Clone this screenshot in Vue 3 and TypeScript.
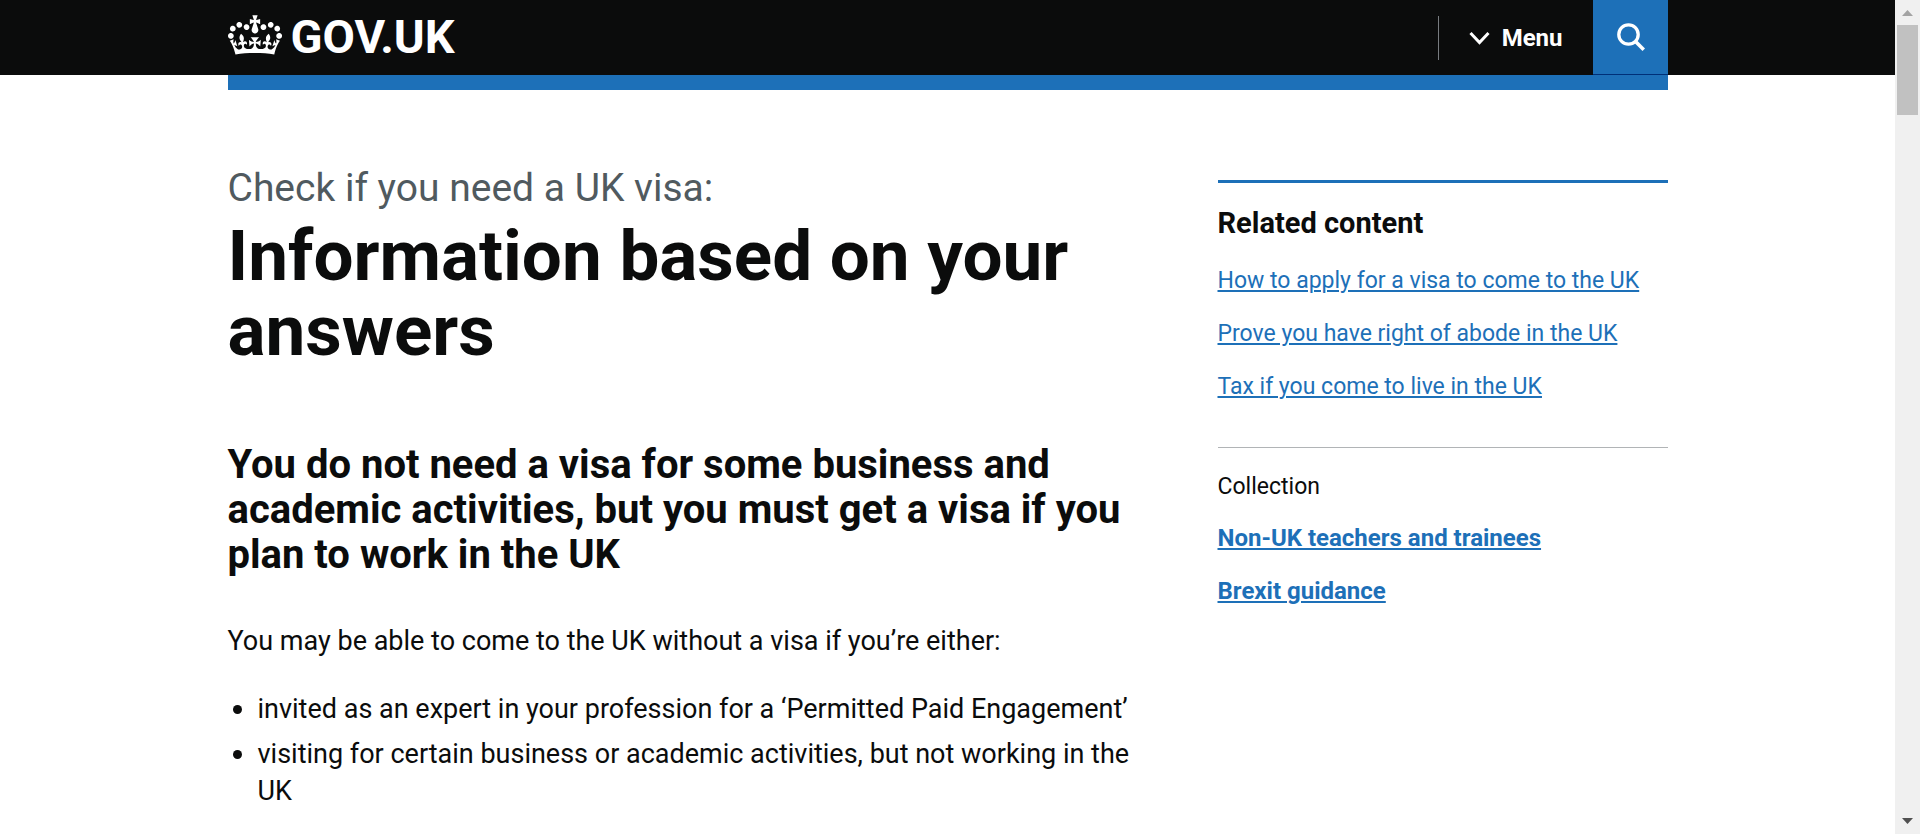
<script setup lang="ts">
interface RelatedLink {
  text: string
  href: string
}

const relatedLinks: RelatedLink[] = [
  { text: 'How to apply for a visa to come to the UK', href: '#apply' },
  { text: 'Prove you have right of abode in the UK', href: '#abode' },
  { text: 'Tax if you come to live in the UK', href: '#tax' },
]

const collections: RelatedLink[] = [
  { text: 'Non-UK teachers and trainees', href: '#teachers' },
  { text: 'Brexit guidance', href: '#brexit' },
]

const conditions: string[] = [
  'invited as an expert in your profession for a ‘Permitted Paid Engagement’',
  'visiting for certain business or academic activities, but not working in the UK',
]
</script>

<template>
  <div class="window">
    <div class="page">
      <header class="header">
        <div class="container header-row">
          <a class="logo" href="#home">
            <svg class="crown" viewBox="0 0 132 97" aria-hidden="true">
              <path
                fill="currentColor"
                fill-rule="evenodd"
                d="M25 30.2c3.5 1.5 7.7-.2 9.1-3.7 1.5-3.6-.2-7.8-3.9-9.2-3.6-1.4-7.6.3-9.1 3.9-1.4 3.5.3 7.5 3.9 9zM9 39.5c3.6 1.5 7.8-.2 9.2-3.7 1.5-3.6-.2-7.8-3.9-9.1-3.6-1.5-7.6.2-9.1 3.8-1.4 3.5.3 7.5 3.8 9zM4.4 57.2c3.5 1.5 7.7-.2 9.1-3.8 1.5-3.6-.2-7.7-3.9-9.1-3.5-1.5-7.6.3-9.1 3.8-1.4 3.5.3 7.6 3.9 9.1zm38.3-21.4c3.5 1.5 7.7-.2 9.1-3.8 1.5-3.6-.2-7.7-3.9-9.1-3.6-1.5-7.6.3-9.1 3.8-1.3 3.6.4 7.7 3.9 9.1zm64.4-5.6c-3.6 1.5-7.8-.2-9.1-3.7-1.5-3.6.2-7.8 3.8-9.2 3.6-1.4 7.7.3 9.2 3.9 1.3 3.5-.4 7.5-3.9 9zm15.9 9.3c-3.6 1.5-7.7-.2-9.1-3.7-1.5-3.6.2-7.8 3.7-9.1 3.6-1.5 7.7.2 9.2 3.8 1.5 3.5-.3 7.5-3.8 9zm4.7 17.7c-3.6 1.5-7.8-.2-9.2-3.8-1.5-3.6.2-7.7 3.9-9.1 3.6-1.5 7.7.3 9.2 3.8 1.3 3.5-.4 7.6-3.9 9.1zM89.3 35.8c-3.6 1.5-7.8-.2-9.2-3.8-1.4-3.6.2-7.7 3.9-9.1 3.6-1.5 7.7.3 9.2 3.8 1.4 3.6-.3 7.7-3.9 9.1zM69.7 17.7l8.9 4.7V9.3l-8.9 2.8c-.2-.3-.5-.6-.9-.9L72.4 0H59.6l3.5 11.2c-.3.3-.6.5-.9.9l-8.8-2.8v13.1l8.8-4.7c.3.3.6.7.9.9l-5 15.4v.1c-.2.8-.4 1.6-.4 2.4 0 4.1 3.1 7.5 7 8.1h.2c.3 0 .7.1 1 .1.4 0 .7 0 1-.1h.2c4-.6 7.1-4.1 7.1-8.1 0-.8-.1-1.7-.4-2.4V34l-5.1-15.4c.4-.2.7-.6 1-.9zM66 92.8c16.9 0 32.8 1.1 47.1 3.2 4-16.9 8.9-26.7 14-33.5l-9.6-3.4c1 4.9 1.1 7.2 0 10.2-1.5-1.4-3-4.3-4.2-8.7L108.6 76c2.8-2 5-3.2 7.5-3.3-4.4 9.4-10 11.9-13.6 11.2-4.3-.8-6.3-4.6-5.6-7.9 1-4.7 5.7-5.9 8-.5 4.3-8.7-3-11.4-7.6-8.8 7.1-7.2 7.9-13.5 2.1-21.1-8 6.1-8.1 12.3-4.5 20.8-4.7-5.4-12.1-2.5-9.5 6.2 3.4-5.2 7.9-2 7.2 3.1-.6 4.3-6.4 7.8-13.5 7.2-10.3-.9-10.9-8-11.2-13.8 2.5-.5 7.1 1.8 11 7.3L80.2 60c-4.1 4.4-8 5.3-12.3 5.4 1.4-4.4 8-11.6 8-11.6H55.5s6.4 7.2 7.9 11.6c-4.2-.1-8-1-12.3-5.4l1.4 16.4c3.9-5.5 8.5-7.7 10.9-7.3-.3 5.8-.9 12.8-11.1 13.8-7.2.6-12.9-2.9-13.5-7.2-.7-5 3.8-8.3 7.1-3.1 2.7-8.7-4.6-11.6-9.4-6.2 3.7-8.5 3.6-14.7-4.6-20.8-5.8 7.6-5 13.9 2.2 21.1-4.7-2.6-11.9.1-7.7 8.8 2.3-5.5 7.1-4.2 8.1.5.7 3.3-1.3 7.1-5.7 7.9-3.5.7-9-1.8-13.5-11.2 2.5.1 4.7 1.3 7.5 3.3l-4.7-15.4c-1.2 4.4-2.7 7.2-4.3 8.7-1.1-3-.9-5.3 0-10.2l-9.5 3.4c5 6.9 9.9 16.7 14 33.5 14.8-2.1 30.8-3.2 47.7-3.2z"
              />
            </svg>
            <span class="logo-text">GOV.UK</span>
          </a>
          <div class="header-actions">
            <span class="divider"></span>
            <button class="menu-button" type="button">
              <svg class="chevron" viewBox="0 0 21 14" aria-hidden="true">
                <path d="M1.5 2l9 9.500 9-9.500" fill="none" stroke="currentColor" stroke-width="3" />
              </svg>
              Menu
            </button>
            <button class="search-button" type="button" aria-label="Search GOV.UK">
              <svg class="search-icon" viewBox="0 0 30 30" aria-hidden="true">
                <circle cx="13.500" cy="12.500" r="9.700" fill="none" stroke="currentColor" stroke-width="3.300" />
                <path d="M20.300 19.300l8.500 8.500" stroke="currentColor" stroke-width="3.600" />
              </svg>
            </button>
          </div>
        </div>
      </header>
      <div class="container"><div class="blue-bar"></div></div>

      <div class="container layout">
        <main>
          <h1>
            <span class="caption">Check if you need a UK visa:</span>
            Information based on your answers
          </h1>
          <h2>
            You do not need a visa for some business and academic activities, but you must get a visa if
            you plan to work in the UK
          </h2>
          <p>You may be able to come to the UK without a visa if you’re either:</p>
          <ul class="conditions">
            <li v-for="item in conditions" :key="item">{{ item }}</li>
          </ul>
        </main>

        <aside class="sidebar">
          <h2 class="related-title">Related content</h2>
          <ul class="links">
            <li v-for="link in relatedLinks" :key="link.href">
              <a :href="link.href">{{ link.text }}</a>
            </li>
          </ul>
          <section class="collection">
            <h3>Collection</h3>
            <ul class="links strong">
              <li v-for="link in collections" :key="link.href">
                <a :href="link.href">{{ link.text }}</a>
              </li>
            </ul>
          </section>
        </aside>
      </div>
    </div>

    <div class="scrollbar" aria-hidden="true">
      <svg class="arrow up" viewBox="0 0 11 6"><path d="M0 6L5.500 0L11 6z" /></svg>
      <div class="thumb"></div>
      <svg class="arrow down" viewBox="0 0 11 6"><path d="M0 0L5.500 6L11 0z" /></svg>
    </div>
  </div>
</template>

<style>
body {
  margin: 0;
}
</style>

<style scoped>
.window {
  display: flex;
  height: 100vh;
  overflow: hidden;
  background: #fff;
  color: #0b0c0c;
  font-family: Roboto, 'Liberation Sans', Arial, sans-serif;
}

.page {
  flex: 1;
  min-width: 0;
  overflow: hidden;
}

.container {
  max-width: 1440px;
  margin: 0 auto;
}

.header {
  background: #0b0c0c;
}

.header-row {
  display: flex;
  justify-content: space-between;
  height: 75px;
}

.logo {
  display: flex;
  align-items: center;
  gap: 9px;
  color: #fff;
  text-decoration: none;
}

.crown {
  width: 54px;
  height: 40px;
  margin-bottom: 5px;
}

.logo-text {
  font-size: 47px;
  font-weight: 700;
  line-height: 50px;
  margin-bottom: 1px;
}

.header-actions {
  display: flex;
  align-items: center;
}

.divider {
  width: 1px;
  height: 44px;
  background: #787c80;
}

.menu-button,
.search-button {
  display: flex;
  align-items: center;
  height: 75px;
  margin: 0;
  border: 0;
  color: #fff;
}

.menu-button {
  gap: 12px;
  padding: 0 30px;
  background: transparent;
  font-family: inherit;
  font-size: 24px;
  font-weight: 700;
}

.chevron {
  width: 21px;
  height: 14px;
}

.search-button {
  justify-content: center;
  width: 75px;
  padding: 0;
  background: #1d70b8;
  border-bottom: 1px solid #003078;
}

.search-icon {
  width: 30px;
  height: 30px;
}

.blue-bar {
  height: 15px;
  background: #1d70b8;
}

.layout {
  display: grid;
  grid-template-columns: minmax(0, 61fr) minmax(0, 30fr);
  gap: 75px;
  align-items: start;
  padding-top: 75px;
}

h1,
h2,
h3,
p,
ul {
  margin: 0;
}

h1 {
  font-size: 71px;
  font-weight: 700;
  line-height: 75px;
}

.caption {
  display: block;
  margin-bottom: 6px;
  color: #505a5f;
  font-size: 39px;
  font-weight: 400;
  line-height: 47px;
}

h2 {
  margin-top: 74px;
  font-size: 40px;
  font-weight: 700;
  line-height: 45px;
}

p {
  margin-top: 46px;
  font-size: 27px;
  line-height: 37px;
}

.conditions {
  display: flex;
  flex-direction: column;
  gap: 8px;
  margin-top: 31px;
  padding-left: 30px;
  font-size: 27px;
  line-height: 37px;
  list-style: none;
}

.conditions li {
  position: relative;
}

.conditions li::before {
  content: '';
  position: absolute;
  top: 14px;
  left: -25px;
  width: 9px;
  height: 9px;
  border-radius: 50%;
  background: #0b0c0c;
}

.sidebar {
  margin-top: 15px;
  border-top: 3px solid #1d70b8;
}

.related-title {
  margin: 21px 0 24px;
  font-size: 29px;
  line-height: 38px;
}

.links {
  display: flex;
  flex-direction: column;
  gap: 23px;
  padding: 0;
  list-style: none;
  font-size: 23px;
  line-height: 30px;
}

.links a {
  color: #1d70b8;
  text-decoration: underline;
  text-decoration-thickness: 2px;
  text-underline-offset: 2px;
}

.strong {
  font-size: 24px;
  font-weight: 700;
}

.collection {
  margin-top: 45px;
  padding-top: 24px;
  border-top: 1px solid #b1b4b6;
}

h3 {
  margin-bottom: 21px;
  font-size: 23px;
  font-weight: 400;
  line-height: 30px;
}

.scrollbar {
  display: flex;
  flex-direction: column;
  align-items: center;
  box-sizing: border-box;
  width: 25px;
  padding: 10px 0;
  background: #f0f0f0;
}

.arrow {
  width: 11px;
  height: 6px;
}

.up {
  fill: #a3a3a3;
}

.down {
  margin-top: auto;
  fill: #505050;
}

.thumb {
  width: 21px;
  height: 90px;
  margin-top: 9px;
  background: #c1c1c1;
}
</style>
